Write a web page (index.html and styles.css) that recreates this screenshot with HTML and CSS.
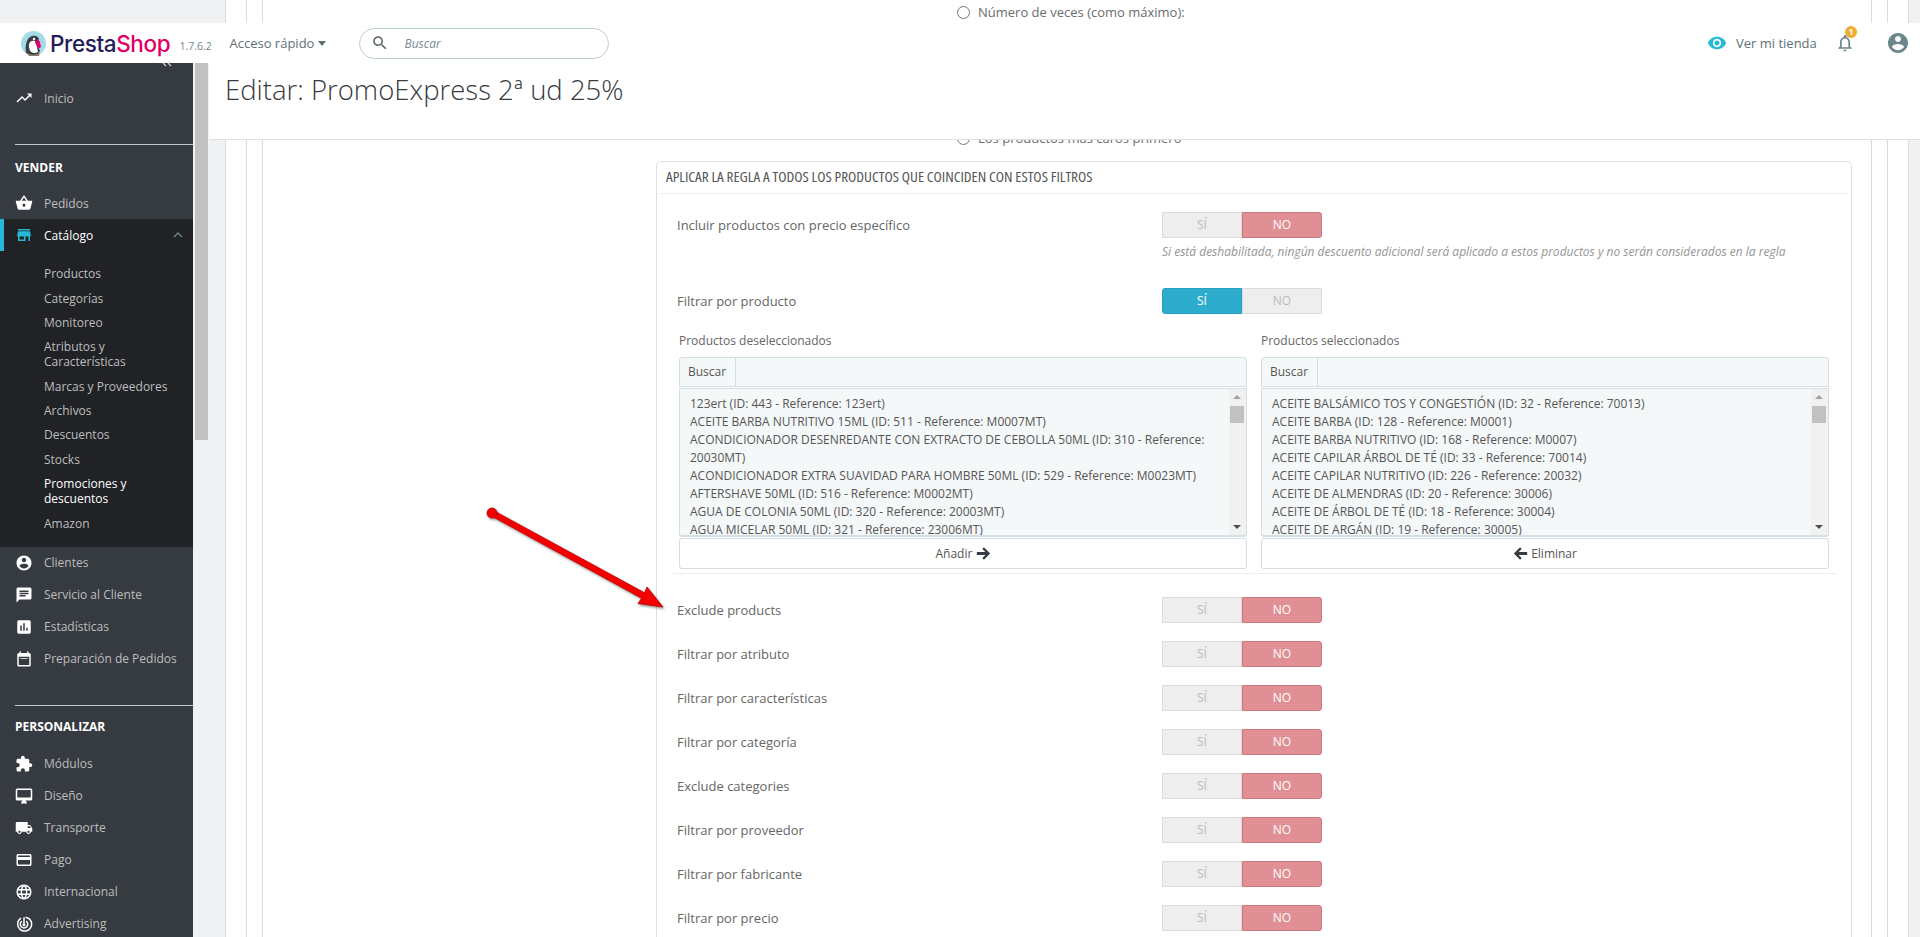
FILE: index.html
```html
<!DOCTYPE html>
<html lang="es">
<head>
<meta charset="utf-8">
<title>Editar: PromoExpress 2ª ud 25%</title>
<link rel="stylesheet" href="styles.css">
</head>
<body>
<svg class="defs" width="0" height="0" aria-hidden="true">
  <symbol id="i-trend" viewBox="0 0 24 24"><path d="M16 6l2.29 2.29-4.88 4.88-4-4L2 16.59 3.41 18l6-6 4 4 6.3-6.29L22 12V6z"/></symbol>
  <symbol id="i-basket" viewBox="0 0 24 24"><path d="M17.21 9l-4.38-6.56c-.19-.28-.51-.42-.83-.42-.32 0-.64.14-.83.43L6.79 9H2c-.55 0-1 .45-1 1 0 .09.01.18.04.27l2.54 9.27c.23.84 1 1.46 1.92 1.46h13c.92 0 1.69-.62 1.93-1.46l2.54-9.27L23 10c0-.55-.45-1-1-1h-4.79zM9 9l3-4.4L15 9H9zm3 8c-1.1 0-2-.9-2-2s.9-2 2-2 2 .9 2 2-.9 2-2 2z"/></symbol>
  <symbol id="i-store" viewBox="0 0 24 24"><path d="M20 4H4v2h16V4zm1 10v-2l-1-5H4l-1 5v2h1v6h10v-6h4v6h2v-6h1zm-9 4H6v-4h6v4z"/></symbol>
  <symbol id="i-user" viewBox="0 0 24 24"><path d="M12 2C6.48 2 2 6.48 2 12s4.48 10 10 10 10-4.48 10-10S17.52 2 12 2zm0 3c1.66 0 3 1.34 3 3s-1.34 3-3 3-3-1.34-3-3 1.34-3 3-3zm0 14.2c-2.5 0-4.71-1.28-6-3.22.03-1.99 4-3.08 6-3.08 1.99 0 5.97 1.09 6 3.08-1.29 1.94-3.5 3.22-6 3.22z"/></symbol>
  <symbol id="i-chat" viewBox="0 0 24 24"><path d="M20 2H4c-1.1 0-1.99.9-1.99 2L2 22l4-4h14c1.1 0 2-.9 2-2V4c0-1.1-.9-2-2-2zM6 9h12v2H6V9zm8 5H6v-2h8v2zm4-6H6V6h12v2z"/></symbol>
  <symbol id="i-stats" viewBox="0 0 24 24"><path d="M19 3H5c-1.1 0-2 .9-2 2v14c0 1.1.9 2 2 2h14c1.1 0 2-.9 2-2V5c0-1.1-.9-2-2-2zM9 17H7v-7h2v7zm4 0h-2V7h2v10zm4 0h-2v-4h2v4z"/></symbol>
  <symbol id="i-cal" viewBox="0 0 24 24"><path d="M19 4h-1V2h-2v2H8V2H6v2H5a2 2 0 00-2 2v14c0 1.1.9 2 2 2h14a2 2 0 002-2V6a2 2 0 00-2-2zm0 16H5V9h14v11zM7 11h10v1H7z"/></symbol>
  <symbol id="i-ext" viewBox="0 0 24 24"><path d="M20.5 11H19V7c0-1.1-.9-2-2-2h-4V3.5C13 2.12 11.88 1 10.5 1S8 2.12 8 3.5V5H4c-1.1 0-1.99.9-1.99 2v3.8H3.5c1.49 0 2.7 1.21 2.7 2.7s-1.21 2.7-2.7 2.7H2V20c0 1.1.9 2 2 2h3.8v-1.5c0-1.49 1.21-2.7 2.7-2.7 1.49 0 2.7 1.21 2.7 2.7V22H17c1.1 0 2-.9 2-2v-4h1.5c1.38 0 2.5-1.12 2.5-2.5S21.88 11 20.5 11z"/></symbol>
  <symbol id="i-desk" viewBox="0 0 24 24"><path d="M21 2H3c-1.1 0-2 .9-2 2v12c0 1.1.9 2 2 2h7l-2 3v1h8v-1l-2-3h7c1.1 0 2-.9 2-2V4c0-1.1-.9-2-2-2zm0 12H3V4h18v10z"/></symbol>
  <symbol id="i-truck" viewBox="0 0 24 24"><path d="M20 8h-3V4H3c-1.1 0-2 .9-2 2v11h2c0 1.66 1.34 3 3 3s3-1.34 3-3h6c0 1.66 1.34 3 3 3s3-1.34 3-3h2v-5l-3-4zM6 18.5c-.83 0-1.5-.67-1.5-1.5s.67-1.5 1.5-1.5 1.5.67 1.5 1.5-.67 1.5-1.5 1.5zm13.5-9l1.96 2.5H17V9.5h2.5zm-1.5 9c-.83 0-1.5-.67-1.5-1.5s.67-1.5 1.5-1.5 1.5.67 1.5 1.5-.67 1.5-1.5 1.5z"/></symbol>
  <symbol id="i-card" viewBox="0 0 24 24"><path d="M20 4H4c-1.11 0-1.99.89-1.99 2L2 18c0 1.11.89 2 2 2h16c1.11 0 2-.89 2-2V6c0-1.11-.89-2-2-2zm0 14H4v-6h16v6zm0-10H4V6h16v2z"/></symbol>
  <symbol id="i-globe" viewBox="0 0 24 24"><path d="M11.99 2C6.47 2 2 6.48 2 12s4.47 10 9.99 10C17.52 22 22 17.52 22 12S17.52 2 11.99 2zm6.93 6h-2.95c-.32-1.25-.78-2.45-1.38-3.56 1.84.63 3.37 1.91 4.33 3.56zM12 4.04c.83 1.2 1.48 2.53 1.91 3.96h-3.82c.43-1.43 1.08-2.76 1.91-3.96zM4.26 14C4.1 13.36 4 12.69 4 12s.1-1.36.26-2h3.38c-.08.66-.14 1.32-.14 2 0 .68.06 1.34.14 2H4.26zm.82 2h2.95c.32 1.25.78 2.45 1.38 3.56-1.84-.63-3.37-1.9-4.33-3.56zm2.95-8H5.08c.96-1.66 2.49-2.93 4.33-3.56C8.81 5.55 8.35 6.75 8.03 8zM12 19.96c-.83-1.2-1.48-2.53-1.91-3.96h3.82c-.43 1.43-1.08 2.76-1.91 3.96zM14.34 14H9.66c-.09-.66-.16-1.32-.16-2 0-.68.07-1.35.16-2h4.68c.09.65.16 1.32.16 2 0 .68-.07 1.34-.16 2zm.25 5.56c.6-1.11 1.06-2.31 1.38-3.56h2.95c-.96 1.65-2.49 2.93-4.33 3.56zM16.36 14c.08-.66.14-1.32.14-2 0-.68-.06-1.34-.14-2h3.38c.16.64.26 1.31.26 2s-.1 1.36-.26 2h-3.38z"/></symbol>
  <symbol id="i-ads" viewBox="0 0 24 24"><path fill="none" stroke="currentColor" stroke-width="2" d="M8 4.200A9.300 9.300 0 1 0 14 2.900"/><path fill="none" stroke="currentColor" stroke-width="2" d="M9 8.200A5 5 0 1 0 15 8.200"/><path fill="none" stroke="currentColor" stroke-width="2" d="M12 3v9"/><circle cx="12" cy="13" r="2"/></symbol>
  <symbol id="i-eye" viewBox="0 0 24 24"><path d="M12 4.500C7 4.500 2.730 7.610 1 12c1.730 4.390 6 7.500 11 7.500s9.270-3.110 11-7.500c-1.730-4.390-6-7.500-11-7.500zM12 17c-2.760 0-5-2.240-5-5s2.240-5 5-5 5 2.240 5 5-2.240 5-5 5zm0-8c-1.660 0-3 1.340-3 3s1.340 3 3 3 3-1.340 3-3-1.340-3-3-3z"/></symbol>
  <symbol id="i-bell" viewBox="0 0 24 24"><path d="M12 22c1.100 0 2-.9 2-2h-4c0 1.100.9 2 2 2zm6-6v-5c0-3.070-1.630-5.640-4.500-6.320V4c0-.83-.67-1.500-1.500-1.500s-1.500.67-1.500 1.500v.68C7.640 5.360 6 7.920 6 11v5l-2 2v1h16v-1l-2-2zm-2 1H8v-6c0-2.480 1.510-4.500 4-4.500s4 2.020 4 4.500v6z"/></symbol>
  <symbol id="i-search" viewBox="0 0 24 24"><path d="M15.500 14h-.79l-.28-.27C15.410 12.590 16 11.110 16 9.500 16 5.910 13.090 3 9.500 3S3 5.910 3 9.500 5.910 16 9.500 16c1.610 0 3.090-.59 4.230-1.570l.27.28v.79l5 4.990L20.490 19l-4.990-5zm-6 0C7.010 14 5 11.990 5 9.500S7.010 5 9.500 5 14 7.010 14 9.500 11.990 14 9.500 14z"/></symbol>
  <symbol id="i-up" viewBox="0 0 24 24"><path d="M12 8l-6 6 1.410 1.410L12 10.830l4.590 4.580L18 14z"/></symbol>
  <symbol id="i-right" viewBox="0 0 14 14"><path d="M7.400 1.200L13.200 7l-5.800 5.800-1.500-1.500 2.900-2.900H.8V5.600h8L5.900 2.700z"/></symbol>
  <symbol id="i-left" viewBox="0 0 14 14"><path d="M6.600 1.200L.8 7l5.800 5.800 1.500-1.500-2.900-2.900h8V5.600h-8l2.900-2.900z"/></symbol>
</svg>

<div class="layout">
  <aside class="side">
    <nav class="nav">
      <svg class="collapse" viewBox="0 0 12 8" aria-hidden="true"><path d="M2 0L5 3M7 0L10 3"/></svg>
      <a class="row row-first"><svg class="ico"><use href="#i-trend"/></svg>Inicio</a>
      <div class="sect">VENDER</div>
      <a class="row"><svg class="ico"><use href="#i-basket"/></svg>Pedidos</a>
      <div class="open">
        <a class="row row-open"><svg class="ico ico-blue"><use href="#i-store"/></svg>Catálogo<svg class="chev"><use href="#i-up"/></svg></a>
        <ul class="sub">
          <li>Productos</li>
          <li>Categorías</li>
          <li>Monitoreo</li>
          <li>Atributos y Características</li>
          <li>Marcas y Proveedores</li>
          <li>Archivos</li>
          <li>Descuentos</li>
          <li>Stocks</li>
          <li class="sub-on">Promociones y descuentos</li>
          <li>Amazon</li>
        </ul>
      </div>
      <a class="row"><svg class="ico"><use href="#i-user"/></svg>Clientes</a>
      <a class="row"><svg class="ico"><use href="#i-chat"/></svg>Servicio al Cliente</a>
      <a class="row"><svg class="ico"><use href="#i-stats"/></svg>Estadísticas</a>
      <a class="row"><svg class="ico"><use href="#i-cal"/></svg>Preparación de Pedidos</a>
      <div class="sect sect-2">PERSONALIZAR</div>
      <a class="row"><svg class="ico"><use href="#i-ext"/></svg>Módulos</a>
      <a class="row"><svg class="ico"><use href="#i-desk"/></svg>Diseño</a>
      <a class="row"><svg class="ico"><use href="#i-truck"/></svg>Transporte</a>
      <a class="row"><svg class="ico"><use href="#i-card"/></svg>Pago</a>
      <a class="row"><svg class="ico"><use href="#i-globe"/></svg>Internacional</a>
      <a class="row"><svg class="ico"><use href="#i-ads"/></svg>Advertising</a>
    </nav>
    <div class="side-track"><div class="side-thumb"></div></div>
  </aside>

  <main class="main">
    <div class="shell">
      <div class="shell-mid">
        <div class="shell-in">
        <div class="radio-row"><span class="radio"></span>Número de veces (como máximo):</div>
        <div class="radio-row radio-row-2"><span class="radio"></span>Los productos más caros primero</div>

        <section class="card">
          <h3 class="card-h">APLICAR LA REGLA A TODOS LOS PRODUCTOS QUE COINCIDEN CON ESTOS FILTROS</h3>
          <div class="form">
            <div class="frow frow-hint">
              <label class="flabel">Incluir productos con precio específico</label>
              <div class="toggle"><span class="t-off">SÍ</span><span class="t-no">NO</span></div>
            </div>
            <p class="hint">Si está deshabilitada, ningún descuento adicional será aplicado a estos productos y no serán considerados en la regla</p>

            <div class="frow">
              <label class="flabel">Filtrar por producto</label>
              <div class="toggle"><span class="t-yes">SÍ</span><span class="t-off">NO</span></div>
            </div>

            <div class="swap">
              <div class="swap-col">
                <div class="swap-title">Productos deseleccionados</div>
                <div class="sbar"><span class="sbar-btn">Buscar</span></div>
                <div class="lbox">
                  <ul class="items">
                    <li>123ert (ID: 443 - Reference: 123ert)</li>
                    <li>ACEITE BARBA NUTRITIVO 15ML (ID: 511 - Reference: M0007MT)</li>
                    <li>ACONDICIONADOR DESENREDANTE CON EXTRACTO DE CEBOLLA 50ML (ID: 310 - Reference: 20030MT)</li>
                    <li>ACONDICIONADOR EXTRA SUAVIDAD PARA HOMBRE 50ML (ID: 529 - Reference: M0023MT)</li>
                    <li>AFTERSHAVE 50ML (ID: 516 - Reference: M0002MT)</li>
                    <li>AGUA DE COLONIA 50ML (ID: 320 - Reference: 20003MT)</li>
                    <li>AGUA MICELAR 50ML (ID: 321 - Reference: 23006MT)</li>
                  </ul>
                  <div class="lscroll"><i class="arr-up"></i><b class="lthumb"></b><i class="arr-down"></i></div>
                </div>
                <div class="sbtn">Añadir <svg class="sarrow"><use href="#i-right"/></svg></div>
              </div>
              <div class="swap-col">
                <div class="swap-title">Productos seleccionados</div>
                <div class="sbar"><span class="sbar-btn">Buscar</span></div>
                <div class="lbox">
                  <ul class="items">
                    <li>ACEITE BALSÁMICO TOS Y CONGESTIÓN (ID: 32 - Reference: 70013)</li>
                    <li>ACEITE BARBA (ID: 128 - Reference: M0001)</li>
                    <li>ACEITE BARBA NUTRITIVO (ID: 168 - Reference: M0007)</li>
                    <li>ACEITE CAPILAR ÁRBOL DE TÉ (ID: 33 - Reference: 70014)</li>
                    <li>ACEITE CAPILAR NUTRITIVO (ID: 226 - Reference: 20032)</li>
                    <li>ACEITE DE ALMENDRAS (ID: 20 - Reference: 30006)</li>
                    <li>ACEITE DE ÁRBOL DE TÉ (ID: 18 - Reference: 30004)</li>
                    <li>ACEITE DE ARGÁN (ID: 19 - Reference: 30005)</li>
                  </ul>
                  <div class="lscroll"><i class="arr-up"></i><b class="lthumb"></b><i class="arr-down"></i></div>
                </div>
                <div class="sbtn"><svg class="sarrow"><use href="#i-left"/></svg> Eliminar</div>
              </div>
            </div>
            <hr class="sep">

            <div class="frow"><label class="flabel">Exclude products</label><div class="toggle"><span class="t-off">SÍ</span><span class="t-no">NO</span></div></div>
            <div class="frow"><label class="flabel">Filtrar por atributo</label><div class="toggle"><span class="t-off">SÍ</span><span class="t-no">NO</span></div></div>
            <div class="frow"><label class="flabel">Filtrar por características</label><div class="toggle"><span class="t-off">SÍ</span><span class="t-no">NO</span></div></div>
            <div class="frow"><label class="flabel">Filtrar por categoría</label><div class="toggle"><span class="t-off">SÍ</span><span class="t-no">NO</span></div></div>
            <div class="frow"><label class="flabel">Exclude categories</label><div class="toggle"><span class="t-off">SÍ</span><span class="t-no">NO</span></div></div>
            <div class="frow"><label class="flabel">Filtrar por proveedor</label><div class="toggle"><span class="t-off">SÍ</span><span class="t-no">NO</span></div></div>
            <div class="frow"><label class="flabel">Filtrar por fabricante</label><div class="toggle"><span class="t-off">SÍ</span><span class="t-no">NO</span></div></div>
            <div class="frow"><label class="flabel">Filtrar por precio</label><div class="toggle"><span class="t-off">SÍ</span><span class="t-no">NO</span></div></div>
          </div>
        </section>
        </div>
      </div>
    </div>
  </main>
</div>

<header class="topbar">
  <svg class="logo-mark" viewBox="0 0 25 25" aria-hidden="true">
    <circle cx="12.500" cy="12.500" r="12.500" fill="#a3dbe8"/>
    <path d="M5 22C4 15 5 7 11 5c3-1 6 0 7 3l-2 2 1 5 2 5-2 3c-4 2-8 1-12-1z" fill="#3a3f47"/>
    <path d="M8 13c1-3 3-4 6-3l2 5 1 6c-3 2-6 1-8-1-.6-3-1.400-4-1-7z" fill="#fff"/>
    <path d="M14 11l3-3 2 3 1 5-3 2z" fill="#df0067"/>
    <path d="M5 21c3 3 10 4 14 1l-1 3H8z" fill="#8d7b68"/>
    <circle cx="13" cy="8" r="1.200" fill="#fff"/>
  </svg>
  <span class="logo-text">Presta<em>Shop</em></span>
  <span class="ver">1.7.6.2</span>
  <span class="quick">Acceso rápido<i class="caret"></i></span>
  <div class="search"><svg class="search-ico"><use href="#i-search"/></svg><span>Buscar</span></div>
  <div class="top-right">
    <svg class="eye"><use href="#i-eye"/></svg>
    <span class="shop">Ver mi tienda</span>
    <span class="bell"><svg class="bell-ico"><use href="#i-bell"/></svg><b class="badge">1</b></span>
    <svg class="me"><use href="#i-user"/></svg>
  </div>
</header>

<div class="page-head"><h1>Editar: PromoExpress 2ª ud 25%</h1></div>

<svg class="pointer" viewBox="0 0 200 120" aria-hidden="true">
  <defs><filter id="shade" x="-10%" y="-10%" width="125%" height="130%"><feDropShadow dx="1" dy="1.500" stdDeviation="1" flood-color="#000" flood-opacity=".45"/></filter></defs>
  <g filter="url(#shade)" fill="#f40000" stroke="#b80000" stroke-width=".8">
    <path d="M8.500 5.500L159.500 87.800 162 82 178 102 153 98.500 156.500 93.200 5.500 10.500z"/>
    <circle cx="7" cy="8" r="5"/>
  </g>
</svg>
</body>
</html>
```
FILE: styles.css
```css
* { box-sizing: border-box; }
html, body { margin: 0; height: 937px; overflow: hidden; }
body { background: #eff1f2; font-family: "Open Sans", "Liberation Sans", sans-serif; font-size: 13px; color: #666; position: relative; }
.defs { position: absolute; }
svg { fill: currentColor; }

.layout { display: flex; height: 937px; }

/* sidebar */
.side { width: 209px; flex: none; display: flex; padding-top: 63px; }
.nav { width: 193px; background: #363a41; color: #bebebe; font-size: 12px; position: relative; overflow: hidden; }
.collapse { position: absolute; left: 161px; top: 0; width: 12px; height: 8px; fill: none; stroke: #cfd5d8; stroke-width: 1.2; }
.row { display: flex; align-items: center; height: 32px; color: #bebebe; }
.row-first { margin-top: 19px; margin-bottom: 30px; }
.ico { width: 18px; height: 18px; margin: 0 11px 0 15px; color: #fff; flex: none; }
.ico-blue { color: #25b9d7; }
.sect { margin-left: 15px; border-top: 1px solid #bbcdd2; height: 43px; padding-top: 14px; color: #fff; font-weight: 700; font-size: 12px; line-height: 18px; }
.sect-2 { margin-top: 30px; height: 43px; padding-top: 12.500px; }
.open { background: #202226; padding-bottom: 11.500px; }
.row-open { color: #fff; border-left: 4px solid #25b9d7; position: relative; }
.row-open .ico { margin-left: 11px; }
.chev { position: absolute; right: 6px; top: 7px; width: 18px; height: 18px; color: #6c868e; }
.sub { list-style: none; margin: 0; padding: 10.500px 10px 0 44px; }
.sub li { line-height: 15px; padding: 4.700px 0; color: #bebebe; }
.sub .sub-on { color: #fff; }
.side-track { flex: none; width: 16px; padding: 0 1px 0 2px; }
.side-thumb { height: 377px; background: #c1c1c1; }

/* main: three nested frames */
.main { flex: 1; min-width: 0; padding: 0 11px 0 16px; overflow: hidden; }
.shell { height: 937px; background: #fff; border: solid #d9dcde; border-width: 0 1px; padding: 0 20px; }
.shell-mid { height: 100%; border: solid #d9dcde; border-width: 0 1px; padding: 0 15px; }
.shell-in { height: 100%; border: solid #d9dcde; border-width: 0 1px; padding-top: 3px; }
.radio-row { display: flex; align-items: center; height: 18px; margin-left: 694px; color: #6c6c6c; }
.radio-row-2 { margin-top: 108px; }
.radio { width: 13px; height: 13px; border: 1px solid #767676; border-radius: 50%; margin-right: 8px; background: #fff; }

.card { margin: 14px 0 0 393px; width: 1196px; border: 1px solid #dde1e3; border-radius: 5px 5px 0 0; padding: 0 3px; background: #fff; }
.card-h { margin: 0; height: 32px; padding-left: 6px; line-height: 28px; border-bottom: 1px solid #eee; font-size: 15.200px; font-weight: 400; color: #555; font-stretch: 75%; }
.form { padding: 18px 0 0 17px; }
.frow { display: flex; align-items: center; height: 26px; margin-bottom: 18px; }
.frow-hint { margin-bottom: 5px; }
.flabel { width: 485px; flex: none; font-size: 13px; color: #666; }
.toggle { display: flex; width: 160px; height: 26px; border-radius: 3px; font-size: 12px; text-align: center; line-height: 24px; }
.toggle span { flex: 1; border: 1px solid #dcdcdc; }
.t-off { background: #eee; color: #bbb; }
.t-no { background: #e08f95; color: #fff; border-color: #c8777d !important; border-radius: 0 3px 3px 0; }
.t-yes { background: #2eacce; color: #fff; border-color: #2a9fbe !important; border-radius: 3px 0 0 3px; }
.hint { margin: 0 0 27px 485px; font-size: 12px; line-height: 18px; font-style: italic; color: #959595; }

.swap { display: flex; gap: 14px; padding-left: 2px; }
.swap-col { width: 568px; flex: none; }
.swap-title { font-size: 12px; line-height: 18px; color: #666; margin-bottom: 7px; }
.sbar { height: 30px; background: #f5f8f9; border: 1px solid #d3dfe2; border-radius: 3px 3px 0 0; margin-bottom: 1px; }
.sbar-btn { display: inline-block; height: 28px; line-height: 28px; padding: 0 9px 0 8px; border-right: 1px solid #d3dfe2; font-size: 12px; color: #555; }
.lbox { display: flex; height: 149px; background: #f5f8f9; border: 1px solid #d3dfe2; border-bottom-width: 2px; border-radius: 0 0 3px 3px; overflow: hidden; }
.items { flex: 1; min-width: 0; list-style: none; margin: 0; padding: 6px 8px 0 10px; font-size: 12px; line-height: 18px; color: #555; }
.lscroll { width: 17px; flex: none; background: #f1f1f1; position: relative; padding-top: 17px; }
.lthumb { display: block; height: 17px; margin: 0 2px 0 1px; background: #c1c1c1; }
.arr-up, .arr-down { position: absolute; left: 4px; width: 0; height: 0; border-left: 4px solid transparent; border-right: 4px solid transparent; }
.arr-up { top: 6px; border-bottom: 4px solid #a3a3a3; }
.arr-down { bottom: 6px; border-top: 4px solid #505050; }
.sbtn { height: 31px; margin-top: 1px; background: #fff; border: 1px solid #d3dfe2; border-radius: 3px; text-align: center; line-height: 29px; font-size: 12px; color: #555; }
.sarrow { width: 15px; height: 15px; vertical-align: -3px; color: #363a41; }
.sep { margin: 4px 0 23px -5px; width: 1164px; height: 1px; border: 0; background: #eee; }

/* top bar */
.topbar { position: absolute; top: 23px; left: 0; right: 0; height: 40px; background: #fff; display: flex; align-items: center; padding-left: 21px; z-index: 3; }
.logo-mark { width: 25px; height: 25px; flex: none; }
.logo-text { margin-left: 4px; font-family: "Inter", "Open Sans", sans-serif; font-size: 22.500px; font-weight: 500; letter-spacing: -.4px; color: #251b5b; width: 129.500px; }
.logo-text em { font-style: normal; color: #df0067; }
.ver { font-size: 10.500px; color: #6c868e; width: 50px; padding-top: 6px; }
.quick { font-size: 13px; color: #5f6f76; width: 129px; flex: none; }
.caret { display: inline-block; margin-left: 4px; vertical-align: 2px; border-left: 4.500px solid transparent; border-right: 4.500px solid transparent; border-top: 5px solid #5f6f76; }
.search { width: 250px; height: 31px; flex: none; border: 1px solid #bbcdd2; border-radius: 16px; display: flex; align-items: center; padding-left: 11px; font-size: 12px; font-style: italic; color: #7c8a90; }
.search-ico { width: 18px; height: 18px; margin-right: 16px; color: #5a6468; }
.top-right { margin-left: auto; display: flex; align-items: center; padding-right: 10px; }
.eye { width: 20px; height: 20px; color: #25b9d7; margin-right: 9px; }
.shop { font-size: 13px; color: #5f6f76; width: 101px; }
.bell { position: relative; width: 49px; height: 20px; }
.bell-ico { width: 20px; height: 20px; color: #6c868e; margin-left: -2px; }
.badge { position: absolute; left: 8px; top: -7px; width: 12px; height: 12px; border-radius: 50%; background: #f0ad32; color: #fff; font-size: 8px; line-height: 12px; text-align: center; font-weight: 700; }
.me { width: 24px; height: 24px; color: #6c868e; }

/* page head */
.page-head { position: absolute; top: 63px; left: 209px; right: 0; height: 77px; background: #fff; border-bottom: 1px solid #dfdfdf; padding-left: 16px; z-index: 2; }
.page-head h1 { margin: 0; font-size: 27.500px; font-weight: 300; line-height: 53px; color: #363a41; }

/* annotation arrow */
.pointer { position: absolute; left: 485px; top: 505px; width: 200px; height: 120px; z-index: 4; }
```
